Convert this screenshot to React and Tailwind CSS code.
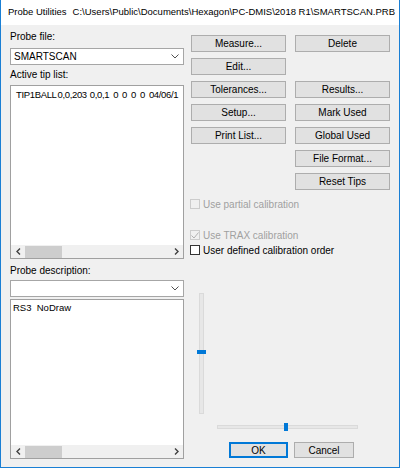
import React from "react";

const Btn = ({ children, className = "" }) => (
  <div
    className={`h-[17px] w-[95px] flex items-center justify-center bg-[#e1e1e1] border border-[#adadad] text-[10px] text-black ${className}`}
  >
    {children}
  </div>
);

const Slot = () => <div className="w-[95px] h-[17px]" />;

const Chevron = () => (
  <svg width="8" height="5" viewBox="0 0 8 5" className="mr-[4px]">
    <polyline points="0.5,0.5 4,4 7.5,0.5" fill="none" stroke="#505050" strokeWidth="1" />
  </svg>
);

const Combo = ({ value }) => (
  <div className="h-[17px] bg-white border border-[#a6a6a6] flex items-center justify-between pl-[3px]">
    <span className="text-[10px] text-black">{value}</span>
    <Chevron />
  </div>
);

const HScroll = () => (
  <div className="h-[13px] bg-[#f0f0f0] flex items-center">
    <div className="w-[14px] flex items-center justify-center">
      <svg width="5" height="7" viewBox="0 0 5 7">
        <polyline points="4,0.5 1,3.5 4,6.5" fill="none" stroke="#404040" strokeWidth="1.4" />
      </svg>
    </div>
    <div className="w-[37px] h-[12px] bg-[#cdcdcd]" />
    <div className="flex-1" />
    <div className="w-[14px] flex items-center justify-center">
      <svg width="5" height="7" viewBox="0 0 5 7">
        <polyline points="1,0.5 4,3.5 1,6.5" fill="none" stroke="#404040" strokeWidth="1.4" />
      </svg>
    </div>
  </div>
);

const Check = ({ label, checked, disabled }) => (
  <div className="flex items-center h-[12px] -ml-[1px]">
    <div
      className={`w-[10px] h-[10px] border flex items-center justify-center ${
        disabled ? "border-[#cccccc]" : "border-[#333333] bg-white"
      }`}
    >
      {checked && (
        <svg width="8" height="7" viewBox="0 0 8 7">
          <polyline points="0.5,3.5 3,6 7.5,0.5" fill="none" stroke="#b0b0b0" strokeWidth="1" />
        </svg>
      )}
    </div>
    <span className={`ml-[3px] text-[10px] ${disabled ? "text-[#a0a0a0]" : "text-black"}`}>{label}</span>
  </div>
);

export default function App() {
  return (
    <div className="w-[400px] h-[468px] bg-[#f0f0f0] border-l border-r border-b border-[#1a7fd4] flex flex-col font-['Liberation_Sans',Arial,sans-serif] overflow-hidden">
      {/* title bar */}
      <div className="h-[25px] bg-white flex items-center pl-[7px] text-[9.5px] text-black whitespace-nowrap shrink-0">
        <span>Probe Utilities</span>
        <span className="ml-[6px]">{"C:\\Users\\Public\\Documents\\Hexagon\\PC-DMIS\\2018 R1\\SMARTSCAN.PRB"}</span>
      </div>

      <div className="flex pl-[9px]">
        {/* left column */}
        <div className="w-[174px] flex flex-col pt-[6px]">
          <div className="h-[12px] text-[10px] text-black leading-[12px]">Probe file:</div>
          <div className="mt-[5px]">
            <Combo value="SMARTSCAN" />
          </div>
          <div className="mt-[4px] h-[12px] text-[10px] text-black leading-[12px]">Active tip list:</div>
          <div className="mt-[4px] h-[174px] bg-white border border-[#a0a0a0] flex flex-col">
            <div className="flex-1 pl-[5px] pt-[2px] text-[9.5px] tracking-[-0.35px] text-black whitespace-nowrap overflow-hidden flex">
              <span>TIP1BALL</span>
              <span className="ml-[1px]">0,0,203</span>
              <span className="ml-[3px]">0,0,1</span>
              <span className="ml-[4px]">0</span>
              <span className="ml-[4px]">0</span>
              <span className="ml-[4px]">0</span>
              <span className="ml-[4px]">0</span>
              <span className="ml-[4px]">04/06/1</span>
            </div>
            <HScroll />
          </div>
          <div className="mt-[6px] h-[12px] text-[10px] text-black leading-[12px]">Probe description:</div>
          <div className="mt-[3px]">
            <Combo value="" />
          </div>
          <div className="mt-[2px] h-[160px] bg-white border border-[#a0a0a0] flex flex-col">
            <div className="flex-1 pl-[2px] pt-[1px] text-[9.5px] text-black whitespace-pre">RS3  NoDraw</div>
            <HScroll />
          </div>
        </div>

        {/* right column */}
        <div className="ml-[7px] w-[199px] flex flex-col pt-[10px]">
          <div className="flex flex-col gap-[6px]">
            <div className="flex gap-[9px]">
              <Btn>Measure...</Btn>
              <Btn>Delete</Btn>
            </div>
            <div className="flex gap-[9px]">
              <Btn>Edit...</Btn>
              <Slot />
            </div>
            <div className="flex gap-[9px]">
              <Btn>Tolerances...</Btn>
              <Btn>Results...</Btn>
            </div>
            <div className="flex gap-[9px]">
              <Btn>Setup...</Btn>
              <Btn>Mark Used</Btn>
            </div>
            <div className="flex gap-[9px]">
              <Btn>Print List...</Btn>
              <Btn>Global Used</Btn>
            </div>
            <div className="flex gap-[9px]">
              <Slot />
              <Btn>File Format...</Btn>
            </div>
            <div className="flex gap-[9px]">
              <Slot />
              <Btn>Reset Tips</Btn>
            </div>
          </div>

          <div className="mt-[8px]">
            <Check label="Use partial calibration" disabled />
          </div>
          <div className="mt-[19px]">
            <Check label="Use TRAX calibration" checked disabled />
          </div>
          <div className="mt-[3px]">
            <Check label="User defined calibration order" />
          </div>

          {/* vertical slider */}
          <div className="mt-[37px] ml-[8px] relative w-[5px] h-[121px] bg-[#e7e7e7] border border-[#dadada]">
            <div className="absolute left-[-3px] top-[56px] w-[9px] h-[4px] bg-[#0078d7]" />
          </div>

          {/* horizontal slider */}
          <div className="mt-[11px] ml-[26px] relative w-[141px] h-[4px] bg-[#e7e7e7] border border-[#dadada]">
            <div className="absolute left-[66px] top-[-3px] w-[4px] h-[8px] bg-[#0078d7]" />
          </div>

          <div className="mt-[13px] ml-[38px] flex gap-[6px]">
            <div className="w-[59px] h-[16px] flex items-center justify-center bg-[#e1e1e1] border-2 border-[#0078d7] text-[10px] text-black">
              OK
            </div>
            <div className="w-[60px] h-[16px] flex items-center justify-center bg-[#e1e1e1] border border-[#adadad] text-[10px] text-black">
              Cancel
            </div>
          </div>
        </div>
      </div>
    </div>
  );
}
